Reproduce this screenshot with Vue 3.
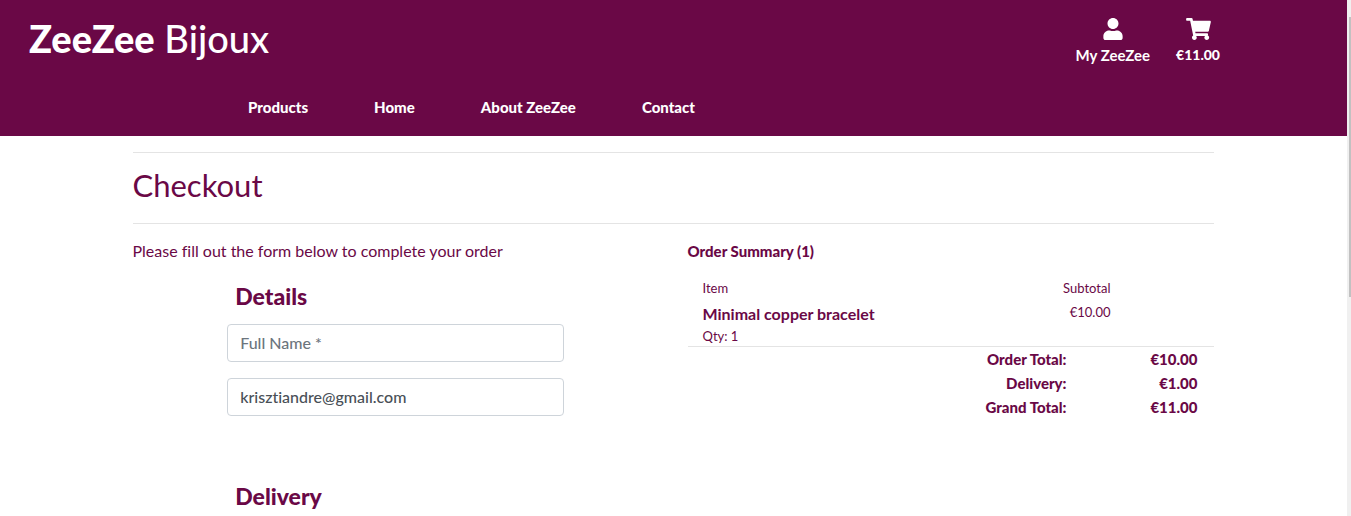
<script setup>
import { ref } from 'vue'

const links = ['Products', 'Home', 'About ZeeZee', 'Contact']
const items = [{ name: 'Minimal copper bracelet', qty: 1, subtotal: '€10.00' }]
const totals = [
  { label: 'Order Total:', value: '€10.00' },
  { label: 'Delivery:', value: '€1.00' },
  { label: 'Grand Total:', value: '€11.00' },
]
const fullName = ref('')
const email = ref('krisztiandre@gmail.com')
</script>

<template>
  <div class="window">
    <div class="page">
      <header class="header">
        <div class="top">
          <a href="#" class="logo"><strong>ZeeZee</strong> Bijoux</a>
          <div class="account">
            <a href="#" class="tool">
              <svg class="icon user" viewBox="0 0 448 512" aria-hidden="true">
                <path d="M224 256c70.7 0 128-57.3 128-128S294.700 0 224 0 96 57.300 96 128s57.300 128 128 128zm89.600 32h-16.700c-22.200 10.200-46.900 16-72.900 16s-50.600-5.800-72.900-16h-16.700C60.200 288 0 348.200 0 422.400V464c0 26.500 21.500 48 48 48h352c26.500 0 48-21.500 48-48v-41.600c0-74.200-60.200-134.400-134.400-134.400z" />
              </svg>
              <span>My ZeeZee</span>
            </a>
            <a href="#" class="tool total">
              <svg class="icon cart" viewBox="0 0 576 512" aria-hidden="true">
                <path d="M528.120 301.319l47.273-208C578.806 78.301 567.391 64 551.990 64H159.208l-9.166-44.810C147.758 8.021 137.930 0 126.529 0H24C10.745 0 0 10.745 0 24v16c0 13.255 10.745 24 24 24h69.883l70.248 343.435C147.325 417.100 136 435.222 136 456c0 30.928 25.072 56 56 56s56-25.072 56-56c0-15.674-6.447-29.835-16.824-40h209.647C430.447 426.165 424 440.326 424 456c0 30.928 25.072 56 56 56s56-25.072 56-56c0-22.172-12.888-41.332-31.579-50.405l5.517-24.276c3.413-15.018-8.002-29.319-23.403-29.319H218.117l-6.545-32h293.145c11.206 0 20.920-7.754 23.403-18.681z" />
              </svg>
              <span>€11.00</span>
            </a>
          </div>
        </div>
        <nav class="nav">
          <a v-for="link in links" :key="link" href="#">{{ link }}</a>
        </nav>
      </header>

      <main class="container">
        <h1>Checkout</h1>
        <div class="columns">
          <section>
            <p class="intro">Please fill out the form below to complete your order</p>
            <form class="form" @submit.prevent>
              <fieldset>
                <legend>Details</legend>
                <input v-model="fullName" type="text" placeholder="Full Name *" aria-label="Full Name" />
                <input v-model="email" type="email" placeholder="Email Address *" aria-label="Email Address" />
              </fieldset>
              <fieldset>
                <legend>Delivery</legend>
              </fieldset>
            </form>
          </section>

          <section>
            <h2>Order Summary (1)</h2>
            <table class="items">
              <thead>
                <tr><th>Item</th><th class="amount">Subtotal</th></tr>
              </thead>
              <tbody>
                <tr v-for="item in items" :key="item.name">
                  <td>
                    <strong>{{ item.name }}</strong>
                    <span class="qty">Qty: {{ item.qty }}</span>
                  </td>
                  <td class="amount">{{ item.subtotal }}</td>
                </tr>
              </tbody>
            </table>
            <dl class="totals">
              <div v-for="row in totals" :key="row.label">
                <dt>{{ row.label }}</dt>
                <dd>{{ row.value }}</dd>
              </div>
            </dl>
          </section>
        </div>
      </main>
    </div>
    <div class="scrollbar" aria-hidden="true"><div class="thumb"></div></div>
  </div>
</template>

<style>
body {
  margin: 0;
  overflow: hidden;
}
</style>

<style scoped>
* {
  box-sizing: border-box;
}
.window {
  display: flex;
  height: 100vh;
  overflow: hidden;
  background: #fff;
  color: #6a0846;
  font: 400 16px/24px Lato, "Liberation Sans", sans-serif;
  font-variant-ligatures: none;
}
.page {
  flex: 1;
  min-width: 0;
}
.header {
  padding: 16px 127px 16px 29px;
  background: #6a0846;
  color: #fff;
}
.header a {
  color: #fff;
  text-decoration: none;
}
.top {
  display: flex;
  justify-content: space-between;
  align-items: flex-start;
  height: 64px;
}
.logo {
  font-size: 38px;
  line-height: 44px;
  font-weight: 500;
}
.logo strong {
  font-weight: 900;
}
.account {
  display: flex;
  gap: 26px;
}
.tool {
  display: flex;
  flex-direction: column;
  align-items: center;
  gap: 3px;
  padding-top: 2px;
  font-size: 15px;
  line-height: 24px;
  font-weight: 700;
}
.total {
  font-size: 14px;
  font-weight: 900;
}
.icon {
  height: 22px;
  fill: currentColor;
}
.user {
  width: 20px;
}
.cart {
  width: 25px;
}
.nav {
  display: flex;
  gap: 66px;
  padding: 15px 0 1px 219px;
  font-size: 15px;
  font-weight: 900;
  line-height: 24px;
}
.container {
  width: 100%;
  max-width: 1110px;
  margin: 0 auto;
  padding: 16px 15px 0 14px;
}
h1 {
  margin: 0 0 15px;
  padding: 12px 0 18px;
  border: solid #e4e4e4;
  border-width: 1px 0;
  font-size: 31px;
  line-height: 40px;
  font-weight: 400;
}
.columns {
  display: grid;
  grid-template-columns: 1fr 1fr;
  gap: 29px;
}
.intro {
  margin: 0;
}
.form {
  width: 64%;
  margin: 17px auto 0;
}
fieldset {
  min-width: 0;
  margin: 0 0 48px;
  padding: 0;
  border: 0;
}
legend {
  margin-bottom: 12px;
  padding: 0 8px;
  font-size: 23px;
  line-height: 32px;
  font-weight: 900;
}
input {
  display: block;
  width: 100%;
  height: 38px;
  margin-bottom: 16px;
  padding: 5px 12px 7px;
  border: 1px solid #ced4da;
  border-radius: 4px;
  background: #fff;
  color: #495057;
  font: 500 16px/24px Lato, "Liberation Sans", sans-serif;
  font-variant-ligatures: none;
}
input::placeholder {
  color: #6c757d;
  opacity: 1;
}
h2 {
  margin: 0 0 15px;
  font-size: 15px;
  line-height: 24px;
  font-weight: 900;
}
.items {
  width: 100%;
  border-collapse: collapse;
  border-bottom: 1px solid #e4e4e4;
  font-size: 13px;
  line-height: 20px;
}
.items th,
.items td {
  padding: 0 0 0 15px;
  text-align: left;
  vertical-align: top;
  font-weight: 400;
}
.items th {
  padding-bottom: 4px;
}
.items .amount {
  padding: 0 103px 0 0;
  text-align: right;
}
.items strong {
  display: block;
  font-size: 16px;
  line-height: 24px;
}
.qty {
  display: block;
}
.totals {
  margin: 0;
  font-size: 15px;
  font-weight: 900;
}
.totals div {
  display: grid;
  grid-template-columns: 1fr 131px;
  padding-right: 16px;
  text-align: right;
}
.totals dd {
  margin: 0;
}
.scrollbar {
  width: 4px;
  padding: 17px 0 0 2px;
  background: #f0f0f0;
}
.thumb {
  height: 280px;
  background: #c1c1c1;
}
</style>
